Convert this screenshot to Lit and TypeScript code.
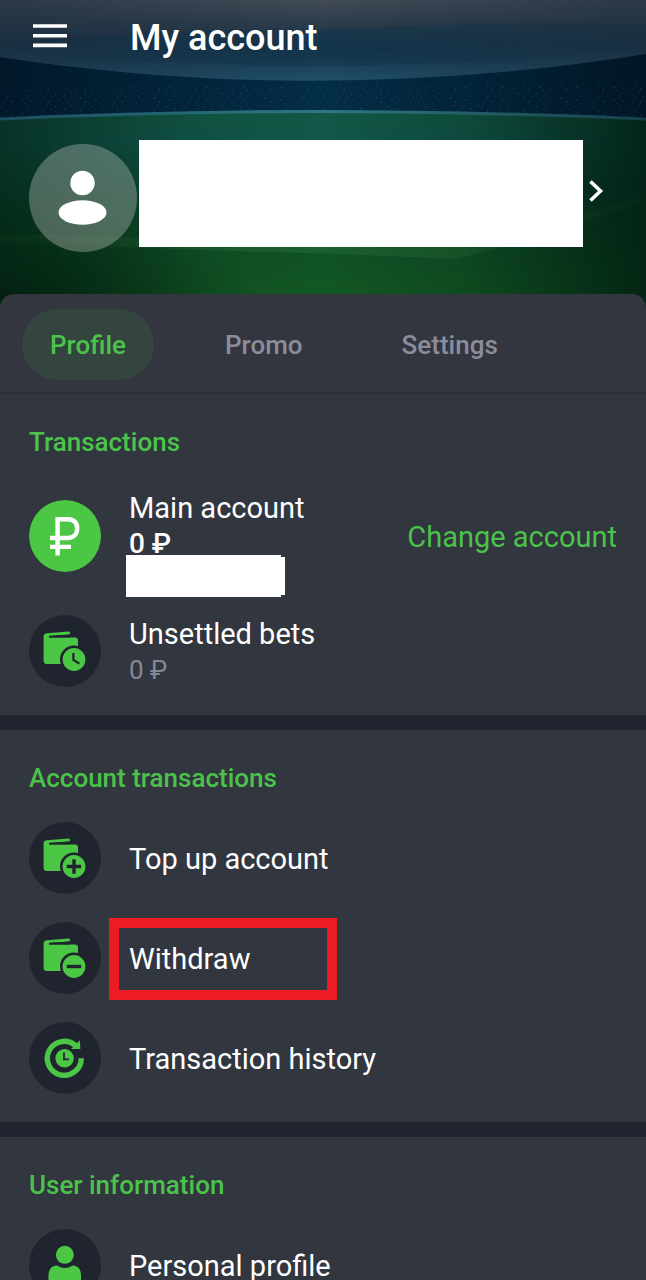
import { LitElement, html, svg, css, nothing } from "lit";
import { customElement, property, state } from "lit/decorators.js";

const wallet = svg`
  <path fill="#4bc745" d="M18 18.2 L39.4 16.6 Q41 16.6 41 18 V19.4 L21 20.8 Q19.6 21.2 20 22.4 H46 Q49 22.4 49 25.4 V46 Q49 49 46 49 H18 Q14.6 49 14.6 46 V21.4 Q14.6 18.6 18 18.2 Z"/>
  <path fill="#20242f" d="M20 21 L41 19.4 V22.4 H20 Z"/>
  <circle cx="45" cy="44.5" r="14" fill="#20242f"/>
  <circle cx="45" cy="44.5" r="11.4" fill="#4bc745"/>`;

const icons = {
  ruble: svg`
    <circle cx="36" cy="36" r="36" fill="#4bc745"/>
    <path fill="none" stroke="#fff" stroke-width="4.4" d="M28.6 55.5 V19.2 H38.5 C45 19.2 48.2 22.8 48.2 28.2 C48.2 34.6 44.4 38 38.5 38 H21 M21 46.9 H42"/>`,
  walletClock: svg`${wallet}
    <path fill="none" stroke="#20242f" stroke-width="2.2" d="M44.4 38 V45 L50.4 48.6"/>`,
  walletPlus: svg`${wallet}
    <path fill="none" stroke="#20242f" stroke-width="3.4" d="M37.8 44.5 H52.2 M45 37.3 V51.7"/>`,
  walletMinus: svg`${wallet}
    <path fill="none" stroke="#20242f" stroke-width="3.4" d="M37.8 44.5 H52.2"/>`,
  history: svg`
    <path fill="none" stroke="#4bc745" stroke-width="5.4" d="M52.3 36.3 A17 17 0 1 1 46.8 23.8"/>
    <path fill="#4bc745" d="M50.8 18.2 L51.4 27 L42.2 27 Z"/>
    <circle cx="35.6" cy="36.2" r="9.2" fill="#4bc745"/>
    <path fill="none" stroke="#20242f" stroke-width="1.8" d="M35 30.4 V37.4 H40"/>`,
  person: svg`
    <circle cx="35.8" cy="25.8" r="9" fill="#4bc745"/>
    <path fill="#4bc745" d="M19.5 52 V46 Q20 36.5 28 36.5 Q35.8 41.5 43.6 36.5 Q51.6 36.5 52 46 V52 Q52 56 48 56 H23.5 Q19.5 56 19.5 52 Z"/>`,
};

type IconName = keyof typeof icons;

@customElement("account-icon")
class AccountIcon extends LitElement {
  @property() name: IconName = "person";

  static styles = css`
    :host { display: block; flex: none; width: 72px; height: 72px; }
    svg { display: block; width: 100%; height: 100%; }
  `;

  render() {
    return html`<svg viewBox="0 0 72 72" aria-hidden="true">
      <circle cx="36" cy="36" r="36" fill="#20242f"/>${icons[this.name]}
    </svg>`;
  }
}

@customElement("stadium-backdrop")
class StadiumBackdrop extends LitElement {
  static styles = css`
    :host { display: block; }
    svg { display: block; width: 100%; height: 100%; }
  `;

  render() {
    return html`<svg viewBox="0 0 646 310" preserveAspectRatio="none" aria-hidden="true">
      <defs>
        <linearGradient id="roof" x2="0" y2="1">
          <stop offset="0" stop-color="#424b57"/><stop offset=".3" stop-color="#2c3c4b"/>
          <stop offset=".55" stop-color="#15324a"/><stop offset="1" stop-color="#1f5068"/>
        </linearGradient>
        <linearGradient id="pitch" x2="0" y2="1">
          <stop offset="0" stop-color="#125844"/><stop offset=".15" stop-color="#11574c"/>
          <stop offset=".45" stop-color="#0c4a30"/><stop offset=".7" stop-color="#0f5226"/>
          <stop offset="1" stop-color="#145a22"/>
        </linearGradient>
        <linearGradient id="stand">
          <stop offset="0" stop-color="#02182a"/><stop offset=".5" stop-color="#032d46"/>
          <stop offset="1" stop-color="#021626"/>
        </linearGradient>
        <linearGradient id="rim">
          <stop offset="0" stop-color="#1b4f62"/><stop offset=".5" stop-color="#2c7a80"/>
          <stop offset="1" stop-color="#173f4c"/>
        </linearGradient>
        <linearGradient id="shade">
          <stop offset="0" stop-color="#011a10" stop-opacity=".6"/>
          <stop offset=".3" stop-color="#011a10" stop-opacity=".12"/>
          <stop offset=".5" stop-color="#011a10" stop-opacity="0"/>
          <stop offset=".72" stop-color="#011a10" stop-opacity=".22"/>
          <stop offset="1" stop-color="#011a10" stop-opacity=".82"/>
        </linearGradient>
        <radialGradient id="corner" gradientUnits="userSpaceOnUse" cx="0" cy="0" r="1" gradientTransform="translate(0 310) scale(260 110)">
          <stop offset="0" stop-color="#011a10" stop-opacity=".8"/>
          <stop offset="1" stop-color="#011a10" stop-opacity="0"/>
        </radialGradient>
        <linearGradient id="edge">
          <stop offset="0" stop-color="#1c2c3c" stop-opacity=".6"/>
          <stop offset=".5" stop-color="#1c2c3c" stop-opacity="0"/>
          <stop offset="1" stop-color="#1c2c3c" stop-opacity=".6"/>
        </linearGradient>
        <pattern id="crowd" width="37" height="13" patternUnits="userSpaceOnUse">
          <path fill="#4e86a3" fill-opacity=".24" d="M1 2h1v1h-1z M6 6h1v2h-1z M10 1h1v1h-1z M14 5h1v1h-1z M18 2h1v2h-1z M21 9h2v1h-2z M3 11h1v1h-1z M27 4h1v2h-1z M31 10h1v1h-1z M34 1h1v1h-1z M11 10h1v2h-1z M25 12h1v1h-1z"/>
        </pattern>
        <pattern id="seats" width="4" height="4" patternUnits="userSpaceOnUse">
          <path fill="#06263c" fill-opacity=".35" d="M0 0h1v2h-1z M2 2h1v1h-1z"/>
        </pattern>
      </defs>
      <rect width="646" height="125" fill="url(#stand)"/>
      <path fill="url(#crowd)" d="M0 90 Q310 82 646 84 V125 H0 Z"/>
      <path fill="url(#roof)" d="M0 0 H646 V54 Q320 106 0 57 Z"/>
      <path fill="#11354b" fill-opacity=".5" d="M0 44 Q180 29 330 29 Q480 22 646 24 V47 Q320 84 0 50 Z"/>
      <path fill="url(#seats)" d="M150 46 H530 V60 Q320 70 150 58 Z"/>
      <path fill="url(#edge)" d="M0 0 H646 V54 Q320 106 0 57 Z"/>
      <path fill="url(#pitch)" d="M0 119 Q310 103 646 119 V310 H0 Z"/>
      <path fill="#4b9b50" fill-opacity=".2" d="M0 234 Q140 236 260 245 H498 Q575 215 646 194 V202 Q560 228 498 248 L456 259 L340 254 Q180 250 0 242 Z"/>
      <path fill="url(#shade)" d="M0 119 Q310 103 646 119 V310 H0 Z"/>
      <path fill="url(#corner)" d="M0 190 H300 V310 H0 Z"/>
      <path fill="none" stroke="url(#rim)" stroke-width="3" d="M0 119 Q310 104 646 119"/>
    </svg>`;
  }
}

@customElement("app-root")
class AppRoot extends LitElement {
  @state() private tab = "Profile";

  static styles = css`
    :host {
      display: block;
      min-height: 100vh;
      background: #20242f;
      color: #fff;
      font-family: Roboto, "Noto Sans", sans-serif;
      font-size: 29px;
      line-height: 36px;
    }
    main { height: 100vh; overflow-y: auto; scrollbar-width: none; }
    button { font: inherit; color: inherit; background: none; border: 0; padding: 0; margin: 0; text-align: left; }
    h1, h2, p { margin: 0; }
    .hero { position: relative; padding-bottom: 42px; }
    .backdrop { position: absolute; inset: 0 0 -16px; }
    .bar { position: relative; display: flex; align-items: center; gap: 62px; height: 76px; padding: 0 33px; }
    .menu { display: flex; padding-bottom: 4px; }
    h1 { font-size: 36px; line-height: 44px; font-weight: 500; }
    .user { position: relative; display: flex; align-items: flex-start; width: 100%; padding: 64px 38px 0 29px; box-sizing: border-box; }
    .avatar { flex: none; display: block; margin-top: 4px; }
    .name { flex: 1; height: 107px; margin: 0 2px; background: #fff; }
    .chevron { display: block; flex: none; margin-top: 39px; }
    .tabs { position: relative; display: flex; gap: 43px; padding: 15px 22px 12px; background: #33363f; border-radius: 14px 14px 0 0; border-bottom: 2px solid #2b2e38; }
    .tab { height: 71px; padding: 0 28px; border-radius: 36px; font-size: 26px; font-weight: 500; color: #8a8d9b; }
    .tab.active { color: #4bc34b; background: #34443f; }
    .section { display: flex; flex-direction: column; gap: 28px; padding: 32px 29px 28px; margin-bottom: 15px; background: #32363f; }
    .balance { gap: 30px; padding-bottom: 27px; }
    h2 { font-size: 26px; line-height: 32px; font-weight: 500; color: #4bc34b; }
    .row { position: relative; display: flex; align-items: center; gap: 28px; width: 100%; }
    .text { flex: 1; position: relative; padding-top: 2px; }
    .main .text { height: 94px; }
    .amount { font-size: 28px; font-weight: 500; }
    .muted { font-size: 26px; color: #858896; }
    .mask { position: absolute; left: -3px; top: 67px; width: 159px; height: 42px; background: #fff; clip-path: polygon(0 0, 155px 0, 155px 2px, 100% 2px, 100% 40px, 155px 40px, 155px 100%, 0 100%); }
    .change { padding-top: 2px; color: #4bc34b; }
    .highlight { position: absolute; left: 80px; top: -4px; width: 228px; height: 82px; box-sizing: border-box; border: 10px solid #ed1c24; }
  `;

  private row(icon: IconName, label: string, marked = false) {
    return html`<button class="row">
      <account-icon name=${icon}></account-icon>
      <span class="text">${label}</span>
      ${marked ? html`<span class="highlight"></span>` : nothing}
    </button>`;
  }

  render() {
    return html`<main>
      <header class="hero">
        <stadium-backdrop class="backdrop"></stadium-backdrop>
        <div class="bar">
          <button class="menu" aria-label="Menu">
            <svg width="35" height="24" viewBox="0 0 35 24"><path stroke="#fff" stroke-width="3.6" d="M0 2h34M0 11.8h34M0 21.4h34"/></svg>
          </button>
          <h1>My account</h1>
        </div>
        <button class="user" aria-label="User details">
          <svg class="avatar" width="108" height="108" viewBox="0 0 108 108">
            <circle cx="54" cy="54" r="54" fill="#b4b9b4" fill-opacity=".4"/>
            <circle cx="53.5" cy="39" r="12.2" fill="#fff"/>
            <ellipse cx="53.5" cy="68.5" rx="24" ry="12.2" fill="#fff"/>
          </svg>
          <span class="name"></span>
          <svg class="chevron" width="23" height="24" viewBox="0 0 23 24"><path fill="none" stroke="#fff" stroke-width="3.6" d="M5.5 2.5 L15.5 12 L5.5 21.5"/></svg>
        </button>
      </header>
      <nav class="tabs">
        ${["Profile", "Promo", "Settings"].map(
          (name) => html`<button class="tab ${this.tab === name ? "active" : ""}" @click=${() => (this.tab = name)}>${name}</button>`
        )}
      </nav>
      <section class="section balance">
        <h2>Transactions</h2>
        <div class="row main">
          <account-icon name="ruble"></account-icon>
          <div class="text">
            <p>Main account</p>
            <p class="amount">0 ₽</p>
            <span class="mask"></span>
          </div>
          <button class="change">Change account</button>
        </div>
        <div class="row">
          <account-icon name="walletClock"></account-icon>
          <div class="text">
            <p>Unsettled bets</p>
            <p class="muted">0 ₽</p>
          </div>
        </div>
      </section>
      <section class="section">
        <h2>Account transactions</h2>
        ${this.row("walletPlus", "Top up account")}
        ${this.row("walletMinus", "Withdraw", true)}
        ${this.row("history", "Transaction history")}
      </section>
      <section class="section">
        <h2>User information</h2>
        ${this.row("person", "Personal profile")}
      </section>
    </main>`;
  }
}
